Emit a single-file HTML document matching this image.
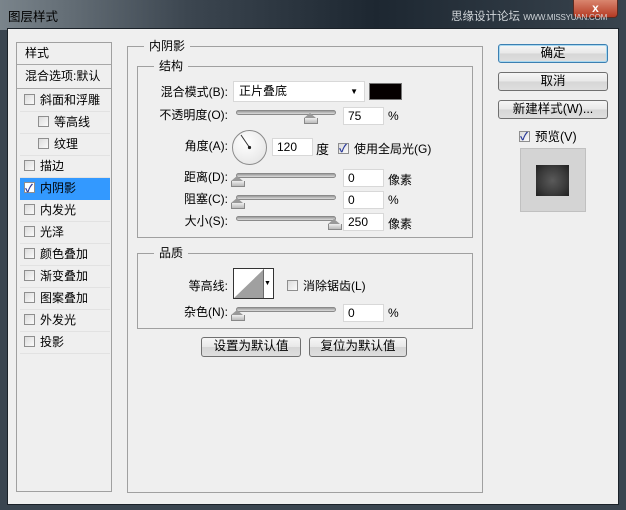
<!DOCTYPE html>
<html><head><meta charset="utf-8"><style>
*{margin:0;padding:0;box-sizing:border-box}
body{width:626px;height:510px;overflow:hidden;background:#3a4550;font-family:"Liberation Sans","Noto Sans CJK SC",sans-serif;font-size:12px;color:#000;position:relative}
.a{position:absolute}
.title{left:0;top:0;width:626px;height:30px;background:linear-gradient(90deg,#7a848b 0%,#3c4650 30%,#1d2731 60%,#39444e 100%)}
.client{left:7px;top:28px;width:612px;height:477px;background:#efefef;border:1px solid #1a2128}
.box{border:1px solid #a0a0a0}
.gl{background:#efefef;padding:0 5px;line-height:14px}
.row{left:20px;width:90px;height:22px;line-height:21px;border-bottom:1px solid #e2e2e2;padding-left:4px}
.cb{display:inline-block;width:11px;height:11px;border:1px solid #8e8e8e;background:linear-gradient(135deg,#dcdcdc,#fafafa);vertical-align:-1px;margin-right:5px;position:relative}
.cb.on::after{content:"✓";position:absolute;left:0;top:-4px;font-size:11px;color:#2a3a9a;font-weight:bold}
.lbl{text-align:right;width:100px;line-height:14px}
.inp{background:#fff;border:1px solid #d8d8d8;height:18px;line-height:16px;padding-left:4px}
.trk{height:5px;border-radius:3px;background:linear-gradient(#9a9a9a,#dcdcdc);border:1px solid #8a8a8a;width:100px}
.th{width:0;height:0}
.th::before{content:"";position:absolute;left:-6px;top:0;border-left:6px solid transparent;border-right:6px solid transparent;border-bottom:5px solid #999}
.th::after{content:"";position:absolute;left:-6px;top:5px;width:12px;height:5px;background:linear-gradient(#eee,#bbb);border:1px solid #888;border-top:none}
.btn{border:1px solid #707070;border-radius:3px;background:linear-gradient(#f6f6f6 0%,#e8e8e8 50%,#d6d6d6 51%,#dedede 100%);text-align:center;line-height:17px;font-size:12.5px}
</style></head><body>
<div class="a title"></div>
<div class="a" style="left:8px;top:6px;color:#000;font-size:12.5px">图层样式</div>
<div class="a" style="left:573px;top:0;width:45px;height:18px;background:linear-gradient(#d9866f,#b53a23);border:1px solid #5a2a20;border-top:none;border-radius:0 0 4px 4px;color:#fff;text-align:center;font-weight:bold;line-height:16px">x</div>
<div class="a" style="left:451px;top:8px;color:#d0d5d9;font-size:11.5px;white-space:nowrap">思缘设计论坛 <span style="font-size:8px;letter-spacing:-0.2px">WWW.MISSYUAN.COM</span></div>
<div class="a client"></div>

<div class="a box" style="left:16px;top:42px;width:96px;height:450px;background:#efefef"></div>
<div class="a" style="left:25px;top:44px;line-height:18px">样式</div>
<div class="a" style="left:17px;top:64px;width:94px;border-top:1px solid #a8a8a8"></div>
<div class="a" style="left:25px;top:67px;line-height:18px">混合选项:默认</div>
<div class="a" style="left:17px;top:88px;width:94px;border-top:1px solid #a8a8a8"></div>
<div class="a row" style="top:90px"><span class="cb"></span>斜面和浮雕</div>
<div class="a row" style="top:112px;padding-left:18px"><span class="cb"></span>等高线</div>
<div class="a row" style="top:134px;padding-left:18px"><span class="cb"></span>纹理</div>
<div class="a row" style="top:156px"><span class="cb"></span>描边</div>
<div class="a row" style="top:178px;background:#3399ff;border-bottom-color:#3399ff"><span class="cb on" style="background:#fff"></span>内阴影</div>
<div class="a row" style="top:200px"><span class="cb"></span>内发光</div>
<div class="a row" style="top:222px"><span class="cb"></span>光泽</div>
<div class="a row" style="top:244px"><span class="cb"></span>颜色叠加</div>
<div class="a row" style="top:266px"><span class="cb"></span>渐变叠加</div>
<div class="a row" style="top:288px"><span class="cb"></span>图案叠加</div>
<div class="a row" style="top:310px"><span class="cb"></span>外发光</div>
<div class="a row" style="top:332px"><span class="cb"></span>投影</div>

<div class="a box" style="left:127px;top:46px;width:356px;height:447px"></div>
<div class="a gl" style="left:144px;top:39px">内阴影</div>
<div class="a box" style="left:137px;top:66px;width:336px;height:172px"></div>
<div class="a gl" style="left:154px;top:59px">结构</div>

<div class="a lbl" style="left:128px;top:85px">混合模式(B):</div>
<div class="a inp" style="left:233px;top:81px;width:132px;height:21px;line-height:19px;padding-left:5px">正片叠底<span style="position:absolute;right:6px;top:0;font-size:8px">▼</span></div>
<div class="a" style="left:369px;top:83px;width:33px;height:17px;background:#050000;border:1px solid #777"></div>

<div class="a lbl" style="left:128px;top:108px">不透明度(O):</div>
<div class="a trk" style="left:236px;top:110px"></div>
<div class="a th" style="left:310px;top:113px"></div>
<div class="a inp" style="left:343px;top:107px;width:41px">75</div>
<div class="a" style="left:388px;top:109px">%</div>

<div class="a lbl" style="left:128px;top:139px">角度(A):</div>
<div class="a" style="left:232px;top:130px;width:35px;height:35px;border-radius:50%;border:1px solid #8a8a8a;background:radial-gradient(circle at 40% 35%,#fff,#e0e0e0)"></div>
<svg class="a" style="left:232px;top:130px" width="35" height="35"><line x1="17.5" y1="17.5" x2="9" y2="5" stroke="#333" stroke-width="1"/><circle cx="17.5" cy="17.5" r="1.6" fill="#222"/></svg>
<div class="a inp" style="left:272px;top:138px;width:41px">120</div>
<div class="a" style="left:316px;top:139px;font-size:13px">度</div>
<div class="a" style="left:338px;top:140px"><span class="cb on"></span>使用全局光(G)</div>

<div class="a lbl" style="left:128px;top:170px">距离(D):</div>
<div class="a trk" style="left:236px;top:173px"></div>
<div class="a th" style="left:237px;top:176px"></div>
<div class="a inp" style="left:343px;top:169px;width:41px">0</div>
<div class="a" style="left:388px;top:171px">像素</div>

<div class="a lbl" style="left:128px;top:192px">阻塞(C):</div>
<div class="a trk" style="left:236px;top:195px"></div>
<div class="a th" style="left:237px;top:198px"></div>
<div class="a inp" style="left:343px;top:191px;width:41px">0</div>
<div class="a" style="left:388px;top:193px">%</div>

<div class="a lbl" style="left:128px;top:214px">大小(S):</div>
<div class="a trk" style="left:236px;top:216px"></div>
<div class="a th" style="left:334px;top:219px"></div>
<div class="a inp" style="left:343px;top:213px;width:41px">250</div>
<div class="a" style="left:388px;top:215px">像素</div>

<div class="a box" style="left:137px;top:253px;width:336px;height:76px"></div>
<div class="a gl" style="left:154px;top:246px">品质</div>
<div class="a lbl" style="left:128px;top:279px">等高线:</div>
<div class="a" style="left:233px;top:268px;width:41px;height:31px;border:1px solid #333;background:#fff"></div>
<svg class="a" style="left:234px;top:269px" width="30" height="29"><polygon points="0,29 30,0 30,29" fill="#a0a0a0"/><line x1="30" y1="0" x2="30" y2="29" stroke="#333"/></svg>
<div class="a" style="left:264px;top:280px;font-size:7px">▼</div>
<div class="a" style="left:287px;top:277px"><span class="cb"></span>消除锯齿(L)</div>

<div class="a lbl" style="left:128px;top:305px">杂色(N):</div>
<div class="a trk" style="left:236px;top:307px"></div>
<div class="a th" style="left:237px;top:310px"></div>
<div class="a inp" style="left:343px;top:304px;width:41px">0</div>
<div class="a" style="left:388px;top:306px">%</div>

<div class="a btn" style="left:201px;top:337px;width:100px;height:20px">设置为默认值</div>
<div class="a btn" style="left:309px;top:337px;width:98px;height:20px">复位为默认值</div>

<div class="a btn" style="left:498px;top:44px;width:110px;height:19px;border-color:#3c7fb1;box-shadow:0 0 0 1px #a8d8f0 inset">确定</div>
<div class="a btn" style="left:498px;top:72px;width:110px;height:19px">取消</div>
<div class="a btn" style="left:498px;top:100px;width:110px;height:19px">新建样式(W)...</div>
<div class="a" style="left:519px;top:126px;font-size:12.5px"><span class="cb on"></span>预览(V)</div>
<div class="a" style="left:520px;top:148px;width:66px;height:64px;background:#d4d4d4;border:1px solid #c0c0c0"></div>
<div class="a" style="left:536px;top:165px;width:33px;height:31px;background:radial-gradient(circle,#5a5a5a 0%,#3a3a3a 60%,#202020 100%)"></div>
</body></html>
